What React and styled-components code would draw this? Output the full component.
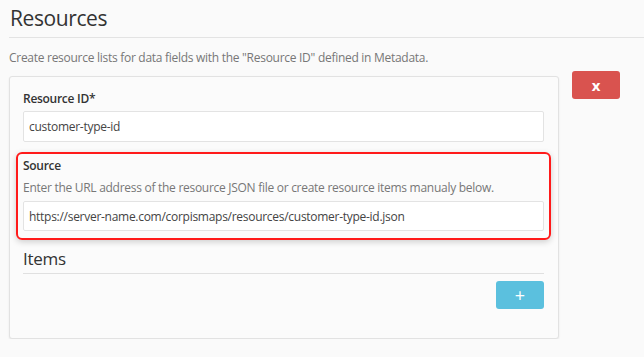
import React from 'react';
import styled, { createGlobalStyle } from 'styled-components';

const GlobalStyle = createGlobalStyle`
  body {
    margin: 0;
    background: #fafafa;
    font-family: "Open Sans", "Noto Sans", sans-serif;
    letter-spacing: -0.28px;
    color: #333;
  }
`;

const Page = styled.div`
  padding: 0 0 0 9px;
`;

const Title = styled.h1`
  margin: 0;
  padding: 5px 0 6px 1px;
  font-size: 21px;
  font-weight: 400;
  line-height: 26px;
  letter-spacing: -0.4px;
  color: #333;
  border-bottom: 1px solid #e3e3e3;
`;

const Lead = styled.p`
  margin: 11px 0 9px;
  font-size: 12px;
  line-height: 18px;
  color: #777;
`;

const Row = styled.div`
  display: flex;
  align-items: flex-start;
  gap: 13px;
`;

const Card = styled.div`
  width: 550px;
  box-sizing: border-box;
  padding: 13px 14px 29px 13px;
  background: #fbfbfb;
  border: 1px solid #e2e2e2;
  border-radius: 3px;
  box-shadow: 0 1px 2px rgba(0, 0, 0, 0.08);
`;

const Field = styled.div`
  display: flex;
  flex-direction: column;
`;

const Highlight = styled.div`
  display: flex;
  flex-direction: column;
  margin: 10px -7px 0;
  padding: 3px 5px 7px;
  border: 2px solid #ff1a1a;
  border-radius: 6px;
  box-shadow: 0 2px 6px rgba(0, 0, 0, 0.18);
`;

const Label = styled.label`
  font-size: 12px;
  line-height: 18px;
  font-weight: 600;
  color: #333;
  margin-bottom: 3px;
`;

const Help = styled.div`
  font-size: 12px;
  line-height: 18px;
  color: #777;
  margin: 1px 0 4px;
`;

const Input = styled.input`
  box-sizing: border-box;
  height: ${p => p.$h || 31}px;
  padding: 0 5px;
  font-family: inherit;
  font-size: 12px;
  letter-spacing: -0.28px;
  color: #444;
  background: #fff;
  border: 1px solid #e3e3e3;
  border-radius: 2px;
  outline: none;
`;

const SectionTitle = styled.h2`
  margin: 8px 0 0;
  padding-bottom: 3px;
  font-size: 17px;
  line-height: 22px;
  font-weight: 400;
  color: #333;
  border-bottom: 1px solid #e0e0e0;
`;

const Actions = styled.div`
  display: flex;
  justify-content: flex-end;
  margin-top: 7px;
`;

const Button = styled.button`
  width: 48px;
  height: 28px;
  padding: 0;
  border: none;
  border-radius: 3px;
  background: ${p => (p.$danger ? '#d9534f' : '#5bc0de')};
  color: #fff;
  font-family: inherit;
  font-size: ${p => (p.$danger ? 15 : 18)}px;
  font-weight: ${p => (p.$danger ? 700 : 400)};
  line-height: 1;
  cursor: pointer;
`;

const CloseButton = styled(Button)`
  margin-top: -5px;
`;

export default function App() {
  return (
    <>
      <GlobalStyle />
      <Page>
        <Title>Resources</Title>
        <Lead>Create resource lists for data fields with the "Resource ID" defined in Metadata.</Lead>
        <Row>
          <Card>
            <Field>
              <Label>Resource ID*</Label>
              <Input defaultValue="customer-type-id" />
            </Field>
            <Highlight>
              <Label>Source</Label>
              <Help>Enter the URL address of the resource JSON file or create resource items manualy below.</Help>
              <Input $h={30} defaultValue="https://server-name.com/corpismaps/resources/customer-type-id.json" />
            </Highlight>
            <SectionTitle>Items</SectionTitle>
            <Actions>
              <Button>+</Button>
            </Actions>
          </Card>
          <CloseButton $danger>x</CloseButton>
        </Row>
      </Page>
    </>
  );
}
